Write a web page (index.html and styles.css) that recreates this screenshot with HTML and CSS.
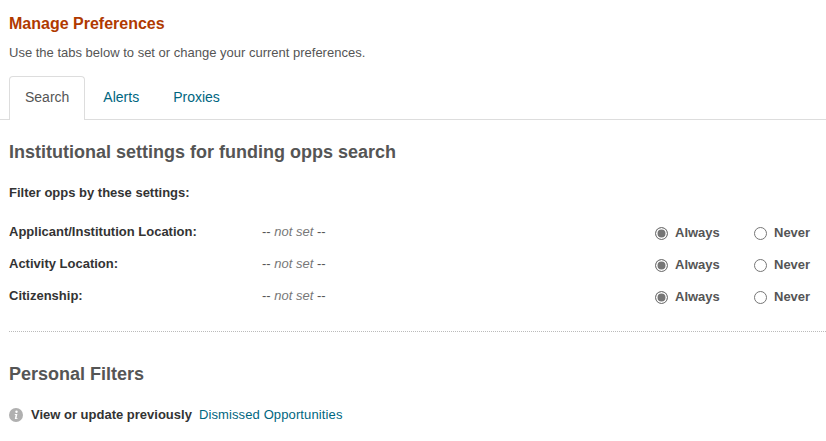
FILE: index.html
```
<!DOCTYPE html>
<html lang="en">
<head>
<meta charset="utf-8">
<title>Manage Preferences</title>
<link rel="stylesheet" href="styles.css">
</head>
<body>
<h1 class="title">Manage Preferences</h1>
<p class="intro">Use the tabs below to set or change your current preferences.</p>
<nav class="tabs">
  <a class="tab active">Search</a>
  <a class="tab">Alerts</a>
  <a class="tab">Proxies</a>
</nav>
<h2 class="section first">Institutional settings for funding opps search</h2>
<p class="filter-head">Filter opps by these settings:</p>
<div class="rows">
  <div class="row">
    <span class="label">Applicant/Institution Location:</span>
    <span class="value">-- <i>not set</i> --</span>
    <label class="opt always"><span class="radio on"></span>Always</label>
    <label class="opt"><span class="radio"></span>Never</label>
  </div>
  <div class="row">
    <span class="label">Activity Location:</span>
    <span class="value">-- <i>not set</i> --</span>
    <label class="opt always"><span class="radio on"></span>Always</label>
    <label class="opt"><span class="radio"></span>Never</label>
  </div>
  <div class="row">
    <span class="label">Citizenship:</span>
    <span class="value">-- <i>not set</i> --</span>
    <label class="opt always"><span class="radio on"></span>Always</label>
    <label class="opt"><span class="radio"></span>Never</label>
  </div>
</div>
<hr class="divider">
<h2 class="section">Personal Filters</h2>
<p class="note">
  <svg class="info" viewBox="0 0 14 14" width="14" height="14" aria-hidden="true"><circle cx="7" cy="7" r="7" fill="#b0b0b0"/><circle cx="7.5" cy="3.7" r="1.2" fill="#fff"/><path d="M5.8 6h2.6l-.9 4.2h1v.9H5.8l.8-4.2h-.8z" fill="#fff"/></svg>
  <span class="note-text">View or update previously</span>
  <a class="link">Dismissed Opportunities</a>
</p>
</body>
</html>
```

FILE: styles.css
```
html, body { margin: 0; padding: 0; }
body {
  width: 826px;
  height: 441px;
  overflow: hidden;
  font-family: "Liberation Sans", Arial, sans-serif;
  font-size: 13px;
  color: #555;
  background: #fff;
}
.title {
  margin: 0;
  padding: 15px 0 0 9px;
  font-size: 16px;
  line-height: 18px;
  font-weight: bold;
  color: #b03a00;
}
.intro {
  margin: 0;
  padding: 12px 0 0 9px;
  font-size: 13px;
  line-height: 16px;
  color: #555;
}
.tabs {
  display: flex;
  margin-top: 15px;
  height: 44px;
  box-sizing: border-box;
  border-bottom: 1px solid #ddd;
  padding-left: 9px;
}
.tab {
  box-sizing: border-box;
  height: 44px;
  padding: 0 16px;
  line-height: 40px;
  font-size: 14px;
  color: #00667f;
  border: 1px solid transparent;
  border-bottom: none;
}
.tab.active {
  padding: 0 15px;
  margin-right: 1px;
  color: #555;
  background: #fff;
  border-color: #ddd;
  border-radius: 4px 4px 0 0;
}
.section {
  margin: 0;
  padding-left: 9px;
  font-size: 18px;
  line-height: 22px;
  font-weight: bold;
  color: #555;
}
.section.first { margin-top: 21px; }
.filter-head {
  margin: 22px 0 0;
  padding-left: 9px;
  font-size: 13px;
  line-height: 16px;
  font-weight: bold;
  color: #333;
}
.rows {
  margin-top: 22px;
  display: flex;
  flex-direction: column;
  gap: 16px;
}
.row {
  display: flex;
  align-items: center;
  height: 16px;
  padding-left: 9px;
}
.label {
  width: 253px;
  font-size: 13px;
  font-weight: bold;
  color: #333;
}
.value {
  flex: 1;
  font-size: 13px;
  color: #555;
}
.value i { color: #777; }
.opt {
  display: flex;
  align-items: center;
  font-size: 13px;
  font-weight: bold;
  color: #555;
  width: 72px;
  position: relative;
  top: 1px;
}
.opt.always { width: 99px; }
.radio {
  box-sizing: border-box;
  width: 13px;
  height: 13px;
  margin-right: 7px;
  border: 1px solid #767676;
  border-radius: 50%;
  background: #fff;
  flex: none;
  position: relative;
  top: 1px;
}
.radio.on {
  background: #767676;
  box-shadow: inset 0 0 0 1.5px #fff;
}
.divider {
  margin: 28px 0 0 9px;
  border: 0;
  border-top: 1px dotted #bbb;
}
.divider + .section { margin-top: 31px; }
.note {
  display: flex;
  align-items: center;
  margin: 22px 0 0;
  padding-left: 9px;
  font-size: 13px;
  line-height: 16px;
  font-weight: bold;
}
.info { margin-right: 8px; flex: none; }
.note-text { color: #333; margin-right: 7px; }
.link { color: #00667f; font-weight: normal; letter-spacing: 0.12px; }
```
